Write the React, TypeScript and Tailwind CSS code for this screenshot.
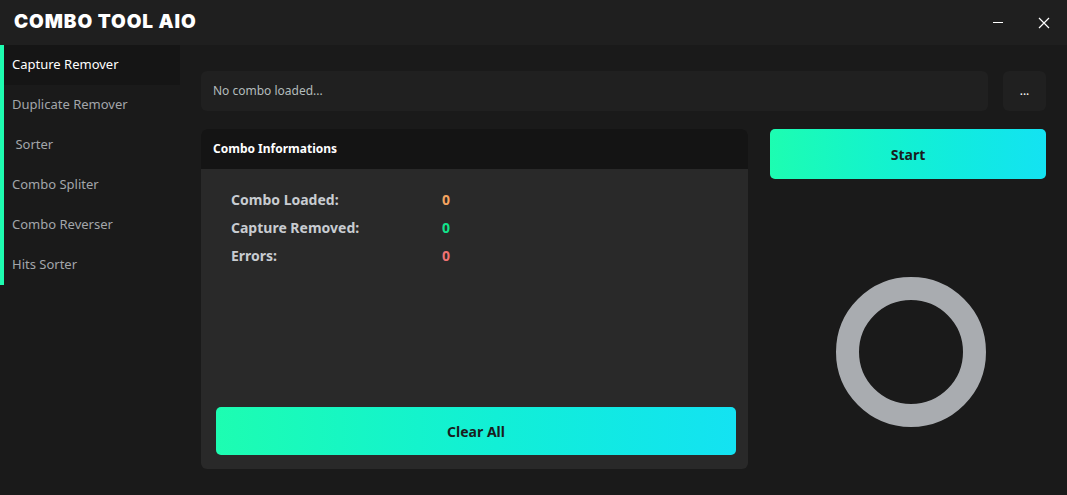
import { useState } from "react";

const tools = [
  "Capture Remover",
  "Duplicate Remover",
  " Sorter",
  "Combo Spliter",
  "Combo Reverser",
  "Hits Sorter",
];

export default function App() {
  const [active, setActive] = useState(0);

  return (
    <div
      className="flex h-[495px] w-[1067px] flex-col overflow-hidden bg-[#1a1a1a] text-white"
      style={{ fontFamily: '"Noto Sans", "Open Sans", sans-serif' }}
    >
      {/* Title bar */}
      <header className="flex h-[45px] shrink-0 items-center justify-between bg-[#1f1f1f] pl-[14px]">
        <h1
          className="text-[19px] font-black tracking-[0.9px] text-white"
          style={{ fontFamily: 'Inter, "Liberation Sans", sans-serif' }}
        >
          COMBO TOOL AIO
        </h1>
        <div className="flex h-full items-center">
          <button className="flex h-full w-[46px] items-center justify-center">
            <span className="block h-px w-[10px] bg-white" />
          </button>
          <button className="flex h-full w-[46px] items-center justify-center">
            <svg width="12" height="12" viewBox="0 0 12 12" stroke="white" strokeWidth="1.2">
              <path d="M1 1l10 10M11 1L1 11" />
            </svg>
          </button>
        </div>
      </header>

      <div className="flex flex-1">
        {/* Sidebar */}
        <aside className="w-[180px] shrink-0">
          <nav className="flex flex-col border-l-4 border-[#1efcb0]">
            {tools.map((t, i) => (
              <button
                key={t}
                onClick={() => setActive(i)}
                className={`flex h-10 items-center whitespace-pre pl-2 text-left text-[13px] ${
                  active === i ? "bg-[#151515] text-white" : "text-[#a3a6aa]"
                }`}
              >
                {t}
              </button>
            ))}
          </nav>
        </aside>

        {/* Main */}
        <main className="flex flex-1 flex-col pl-[21px] pr-[21px] pt-[26px]">
          <div className="flex gap-[15px]">
            <div className="flex h-10 flex-1 items-center rounded-md bg-[#202020] px-3 text-[12px] text-[#b3bcbc]">
              No combo loaded...
            </div>
            <button className="flex h-10 w-[43px] items-center justify-center rounded-md bg-[#202020] text-[12px] text-white">
              ...
            </button>
          </div>

          <div className="mt-[18px] flex gap-[22px]">
            {/* Combo Informations */}
            <section className="flex h-[340px] w-[547px] flex-col overflow-hidden rounded-md bg-[#292929]">
              <div className="flex h-10 items-center bg-[#141414] px-3 text-[12px] font-bold text-white">
                Combo Informations
              </div>
              <div className="flex flex-1 flex-col px-[15px] pb-[14px] pt-[20px]">
                <div className="flex flex-col gap-[7px] pl-[15px] text-[14px] font-bold text-[#c8ccd1]">
                  <div className="flex h-[21px] items-center">
                    <span className="w-[211px]">Combo Loaded:</span>
                    <span className="text-[#f4a460]">0</span>
                  </div>
                  <div className="flex h-[21px] items-center">
                    <span className="w-[211px]">Capture Removed:</span>
                    <span className="text-[#12e38c]">0</span>
                  </div>
                  <div className="flex h-[21px] items-center">
                    <span className="w-[211px]">Errors:</span>
                    <span className="text-[#f07272]">0</span>
                  </div>
                </div>
                <button className="mt-auto flex h-12 w-[520px] items-center justify-center rounded-[5px] bg-gradient-to-r from-[#1dfdb1] to-[#14e2f2] text-[14px] font-bold text-[#1a1d1e]">
                  Clear All
                </button>
              </div>
            </section>

            {/* Right column */}
            <div className="flex flex-1 flex-col">
              <button className="flex h-[50px] w-full items-center justify-center rounded-[5px] bg-gradient-to-r from-[#1dfdb1] to-[#14e2f2] text-[14px] font-bold text-[#1a1d1e]">
                Start
              </button>
              <div className="flex flex-1 items-start justify-center pt-[98px] pl-[5px]">
                <svg width="150" height="150" viewBox="0 0 150 150">
                  <circle cx="75" cy="75" r="63.5" fill="none" stroke="#a9acb0" strokeWidth="23" />
                </svg>
              </div>
            </div>
          </div>
        </main>
      </div>
    </div>
  );
}
